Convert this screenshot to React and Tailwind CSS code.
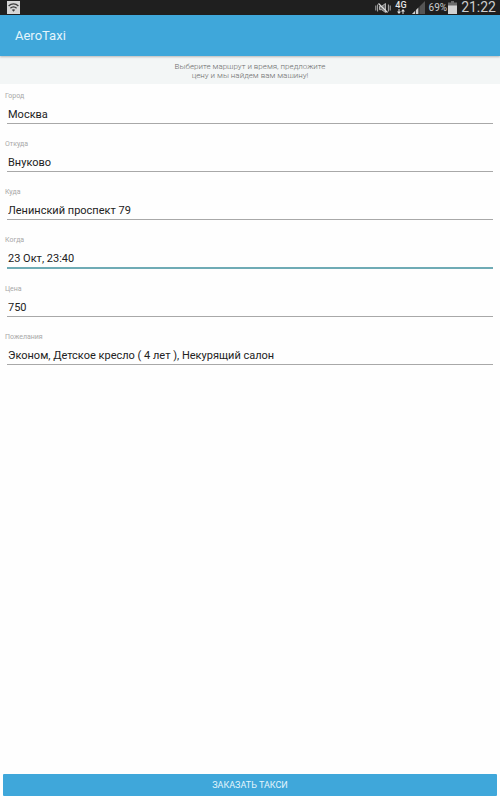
import { useState } from "react";

const fields = [
  { name: "city", label: "Город", value: "Москва" },
  { name: "from", label: "Откуда", value: "Внуково" },
  { name: "to", label: "Куда", value: "Ленинский проспект 79" },
  { name: "when", label: "Когда", value: "23 Окт, 23:40", active: true },
  { name: "price", label: "Цена", value: "750" },
  { name: "wishes", label: "Пожелания", value: "Эконом, Детское кресло ( 4 лет ), Некурящий салон" },
];

const WifiIcon = () => (
  <svg width="13" height="13" viewBox="0 0 13 13" fill="none">
    <rect width="13" height="13" fill="#d6d6d6" />
    <path d="M1.6 5C4.4 2.2 8.6 2.2 11.4 5M3.4 7.3c1.7-1.8 4.5-1.8 6.2 0" stroke="#3c3c3c" strokeWidth="1.3" />
    <path d="M4.8 8.8c1-.8 2.4-.8 3.4 0L6.5 10.8z" fill="#3c3c3c" />
  </svg>
);

const MuteIcon = () => (
  <svg width="16" height="12" viewBox="0 0 16 12" fill="none" stroke="#bdbdbd">
    <path d="M.8 3.5v5M2.6 2.5v7M13.4 2.5v7M15.2 3.5v5" strokeWidth=".9" />
    <path d="M4.5 4.3h2.2L10.5 1.5v9L6.7 7.7H4.5z" fill="#6c6c6c" strokeWidth=".9" />
    <path d="M3.5 1.5l9 9" stroke="#dcdcdc" strokeWidth="1.3" />
  </svg>
);

const NetworkIcon = () => (
  <span className="flex flex-col items-center">
    <span className="text-[9px] leading-[8px] font-medium text-[#e6e6e6]">4G</span>
    <svg width="8" height="5" viewBox="0 0 8 5" fill="#e0e0e0">
      <path d="M1.5 0h1v2.5H4L2 5 0 2.5h1.5zM5.5 5h1V2.5H8L6 0 4 2.5h1.5z" />
    </svg>
  </span>
);

const SignalIcon = () => (
  <svg width="13" height="13" viewBox="0 0 13 13">
    <path d="M13 0v13H0z" fill="#555555" />
    <path d="M6.5 6.5V13H0z" fill="#d0d0d0" />
    <path d="M3.5 8v5M7 5.5V13" stroke="#1f1f1f" strokeWidth=".8" />
  </svg>
);

const BatteryIcon = () => (
  <svg width="9" height="13" viewBox="0 0 9 13">
    <path d="M3 0h3v1.5h3V13H0V1.5h3z" fill="#6c6c6c" />
    <path d="M0 4.5h9V13H0z" fill="#d2d2d2" />
  </svg>
);

const StatusBar = () => (
  <div className="flex h-[15px] items-center justify-between bg-[#1f1f1f] pr-1 pl-[7px]">
    <WifiIcon />
    <div className="flex items-center text-[#cccccc]">
      <MuteIcon />
      <span className="ml-1"><NetworkIcon /></span>
      <span className="ml-[5px]"><SignalIcon /></span>
      <span className="ml-1 text-[10px] leading-[15px]">69%</span>
      <span className="ml-px"><BatteryIcon /></span>
      <span className="ml-1 text-[14px] leading-[15px]">21:22</span>
    </div>
  </div>
);

const Field = ({ field, value, onChange }) => (
  <div className="flex flex-col">
    <label htmlFor={field.name} className="px-[5px] text-[7px] leading-[10px] text-[#a8a8a8]">
      {field.label}
    </label>
    <input
      id={field.name}
      name={field.name}
      type="text"
      value={value}
      onChange={onChange}
      className={`mx-[7px] mt-1 box-content h-4 bg-transparent pt-[2px] pl-px text-[11px] leading-4 text-[#222222] outline-none ${
        field.active ? "border-b-2 border-[#6fabb5]" : "border-b border-[#a8a8a8]"
      }`}
    />
  </div>
);

const App = () => {
  const [order, setOrder] = useState(Object.fromEntries(fields.map((f) => [f.name, f.value])));

  const handleChange = (e) => {
    setOrder({ ...order, [e.target.name]: e.target.value });
  };

  return (
    <div className="flex min-h-screen flex-col bg-[#fefefe] font-['Roboto',sans-serif]">
      <StatusBar />
      <header className="relative flex h-[41px] items-center bg-[#3fa7da] px-[15px] shadow-[0_1px_2px_rgba(0,0,0,0.25)]">
        <h1 className="text-[13px] leading-4 text-[#e4f5fc]">AeroTaxi</h1>
      </header>
      <p className="bg-[#f3f6f6] pt-[6px] pb-1 text-center text-[8px] leading-[9px] font-light text-[#6c6c6c]">
        Выберите маршрут и время, предложите
        <br />
        цену и мы найдем вам машину!
      </p>

      <form className="flex grow flex-col" onSubmit={(e) => e.preventDefault()}>
        <div className="flex flex-col gap-[15px] pt-[7px]">
          {fields.map((field) => (
            <Field key={field.name} field={field} value={order[field.name]} onChange={handleChange} />
          ))}
        </div>
        <button
          type="submit"
          className="mx-[3px] mt-auto mb-1 h-[22px] rounded-[1px] bg-[#3fa7da] text-[9px] leading-3 text-[#e4f5fc]"
        >
          ЗАКАЗАТЬ ТАКСИ
        </button>
      </form>
    </div>
  );
};

export default App;
